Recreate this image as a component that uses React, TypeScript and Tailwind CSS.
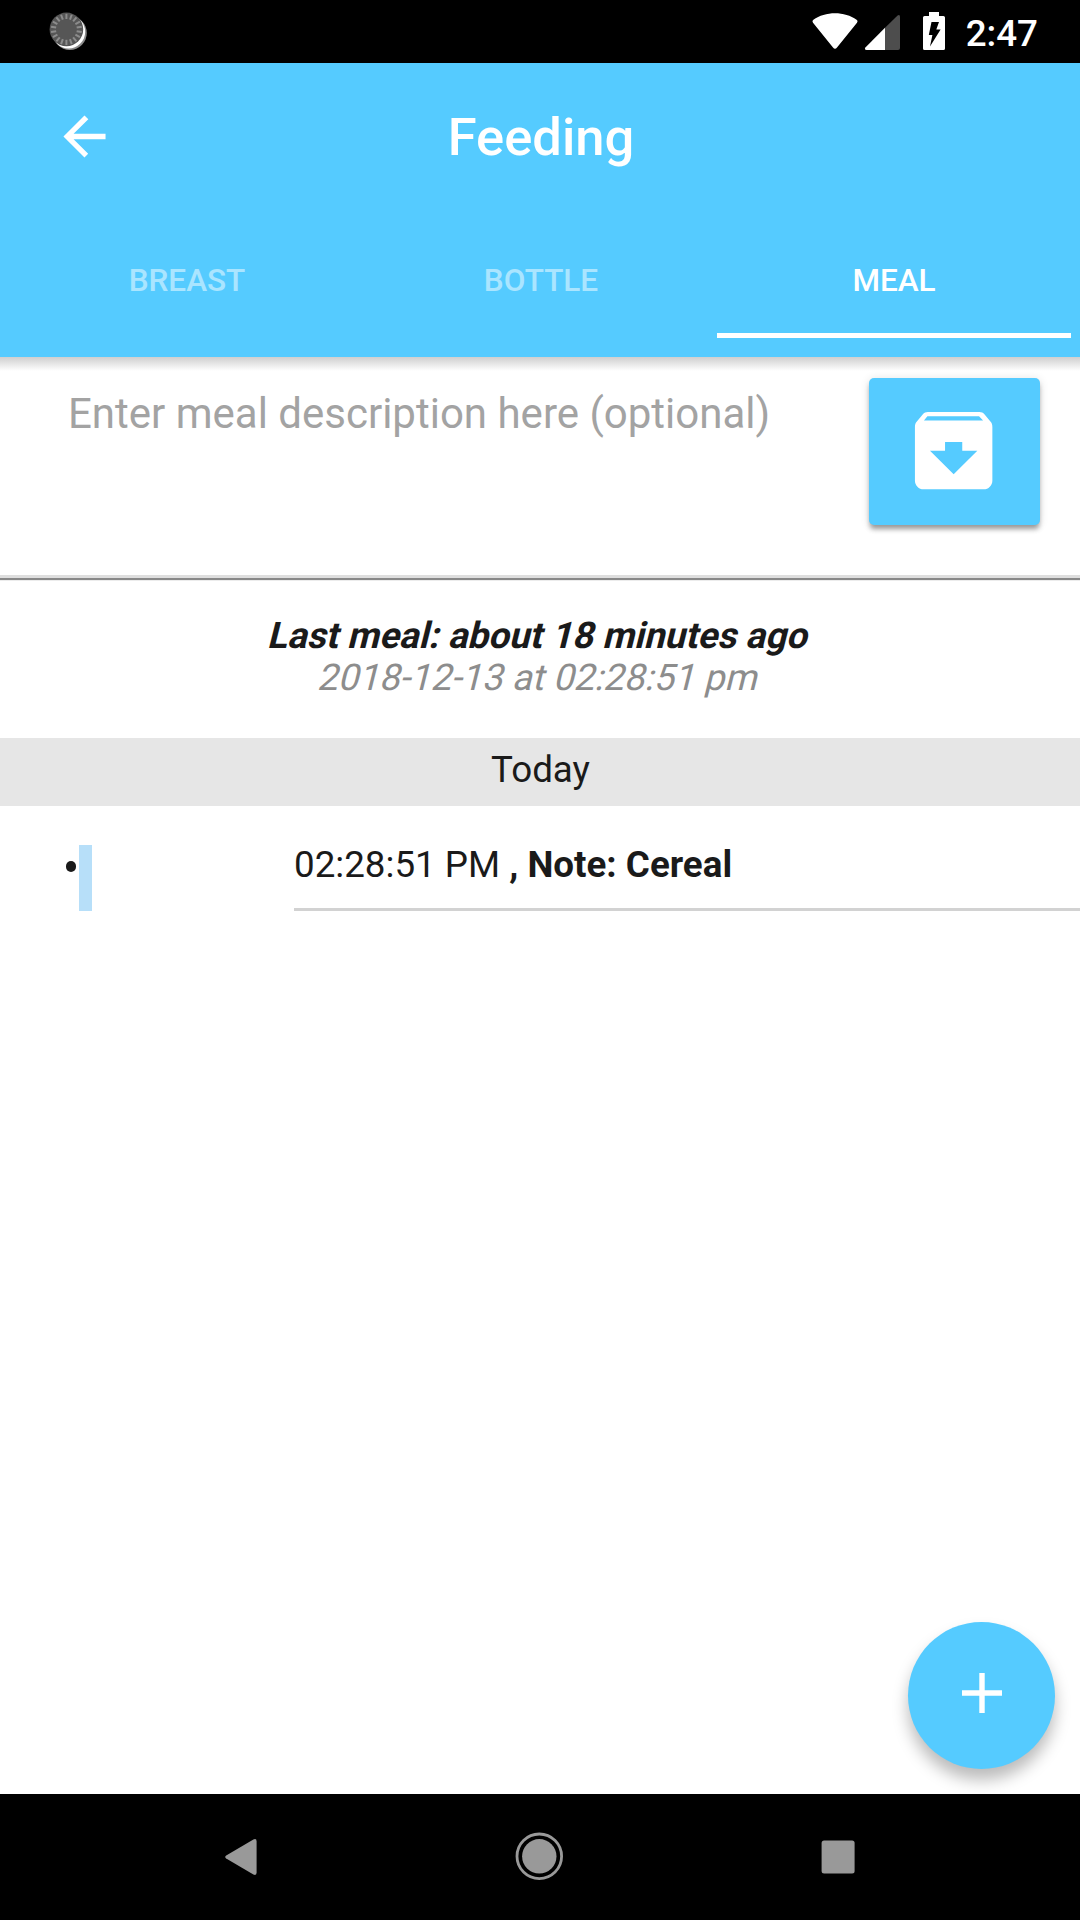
import React from "react";
import { IoMdArchive, IoMdArrowBack } from "react-icons/io";

const ticks = Array.from({ length: 18 }, (_, i) => i * 20);

function StatusBar() {
  return (
    <div className="flex h-[63px] shrink-0 items-start bg-black">
      <svg className="ml-[48px] mt-[11px] h-[41px] w-[41px]" viewBox="48 11 41 41">
        <circle cx="69.8" cy="33" r="17" fill="#8a8a8a" />
        <circle cx="68.6" cy="31.8" r="16.6" fill="#fff" />
        <circle cx="66.4" cy="29.4" r="16.8" fill="#565656" />
        {ticks.map((a) => (
          <line
            key={a}
            x1="66.4"
            y1="13.8"
            x2="66.4"
            y2="19"
            stroke="#8c8c8c"
            strokeWidth="2"
            transform={`rotate(${a} 66.4 29.4)`}
          />
        ))}
      </svg>
      <svg className="ml-auto h-[63px] w-[149px]" viewBox="806 0 149 63">
        <path
          d="M813 22.8 Q811.6 21 813.4 19.8 C825 11 845 11 856.6 19.8 Q858.4 21 857 22.8 L837 47.6 Q835 50 833 47.6 Z"
          fill="#fff"
        />
        <path d="M885 27.8 L897.6 15.4 Q900 14 900 16.8 V48 Q900 50 898 50 H885 Z" fill="#4d4d4d" />
        <path d="M885 27.8 V50 H866.6 Q864 49.6 865.4 47.4 Z" fill="#fff" />
        <path
          d="M929 12 H939 V16 H943.4 Q945 16 945 17.6 V48.4 Q945 50 943.4 50 H924.6 Q923 50 923 48.4 V17.6 Q923 16 924.6 16 H929 Z M931.5 22 L928.8 35 H932.4 L930 46.4 L940.6 29.4 H936.3 L939 22 Z"
          fill="#fff"
          fillRule="evenodd"
        />
      </svg>
      <span className="ml-[11px] mr-[42px] mt-[12px] text-[36.75px] font-medium leading-[43px] text-white">2:47</span>
    </div>
  );
}

function Header() {
  return (
    <header className="relative z-10 h-[294px] shrink-0 bg-[#55cbff] text-white">
      <div className="grid h-[147px] grid-cols-[181px_1fr_179px] items-center">
        <button className="ml-[53px] h-[63px] w-[63px]">
          <IoMdArrowBack className="h-[63px] w-[63px]" />
        </button>
        <h1 className="text-center text-[52.5px] font-medium leading-[62px]">Feeding</h1>
      </div>
      <nav className="mx-[9px] grid h-[128px] grid-cols-3 text-center text-[31.5px] font-medium">
        <div className="pl-[2px] pt-[47px] leading-[48px] opacity-50">BREAST</div>
        <div className="pl-[2px] pt-[47px] leading-[48px] opacity-50">BOTTLE</div>
        <div className="border-b-[5px] border-white pt-[47px] leading-[48px]">MEAL</div>
      </nav>
      <div className="absolute left-0 top-full h-[14px] w-full bg-gradient-to-b from-[#cfcfcf] to-white" />
    </header>
  );
}

export default function App() {
  return (
    <div className="flex h-[1920px] w-[1080px] flex-col overflow-hidden bg-white font-['Roboto',sans-serif] text-[36.75px] text-[#1a1a1a]">
      <StatusBar />
      <Header />
      <main className="relative flex flex-1 flex-col bg-white">
        <section className="flex h-[218px] items-start justify-between pl-[68px] pr-[40.4px] pt-[21px]">
          <p className="mt-[11px] text-[42px] leading-[49px] text-[#a3a3a3]">Enter meal description here (optional)</p>
          <button className="flex h-[147px] w-[170.6px] items-center justify-center rounded-[5px] bg-[#55cbff] pb-[2px] pr-[1.5px] text-white shadow-[0_5px_5px_-1px_rgba(0,0,0,0.36),0_1px_10px_rgba(0,0,0,0.12)]">
            <IoMdArchive className="h-[95.3px] w-[95.3px]" />
          </button>
        </section>
        <div className="h-[3px] bg-[#dedede]" />
        <div className="h-[2px] bg-[#888888]" />
        <div className="h-[1px] bg-[#ececec]" />
        <section className="flex h-[157px] flex-col pr-[7px] pt-[33.5px] text-center leading-[42px]">
          <p className="origin-[50%_33.5px] -skew-x-[14deg] font-bold">Last meal: about 18 minutes ago</p>
          <p className="origin-[50%_33.5px] -skew-x-[14deg] text-[#8d8d8d]">2018-12-13 at 02:28:51 pm</p>
        </section>
        <div className="h-[68px] bg-[#e6e6e6] pl-[1px] text-center leading-[64px]">Today</div>
        <section className="flex pt-[39px]">
          <div className="flex w-[294px] pl-[65.5px]">
            <div className="mt-[16px] h-[10.5px] w-[10.5px] rounded-full bg-[#1a1a1a]" />
            <div className="ml-[3px] h-[66px] w-[13px] bg-[#b7dff9]" />
          </div>
          <div className="h-[66px] flex-1 border-b-[3px] border-[#d2d2d2] leading-[39px]">
            02:28:51 PM <b>, Note: Cereal</b>
          </div>
        </section>
        <button className="absolute bottom-[25px] right-[24.6px] flex h-[147px] w-[147px] justify-center rounded-full bg-[#55cbff] pt-[51px] shadow-[0_11px_16px_rgba(0,0,0,0.27)]">
          <svg className="h-[40px] w-[40px]" viewBox="0 0 40 40">
            <path d="M20 0V40M0 20H40" stroke="#fff" strokeWidth="5.4" />
          </svg>
        </button>
      </main>
      <footer className="flex h-[126px] shrink-0 items-center justify-between bg-black px-[216px]">
        <svg className="h-[50px] w-[50px]" viewBox="216 1832 50 50">
          <path
            d="M226.2 1855.4 L253.4 1839.4 Q256.6 1838 256.6 1841.4 V1872.6 Q256.6 1876 253.4 1874.6 L226.2 1858.6 Q224.2 1857 226.2 1855.4 Z"
            fill="#999"
          />
        </svg>
        <svg className="h-[50px] w-[50px]" viewBox="0 0 50 50">
          <circle cx="24.3" cy="24.3" r="22.3" fill="none" stroke="#999" strokeWidth="2.8" />
          <circle cx="24.3" cy="24.3" r="17.2" fill="#999" />
        </svg>
        <svg className="h-[50px] w-[50px]" viewBox="0 0 50 50">
          <rect x="7.6" y="8.4" width="33" height="33" rx="2.5" fill="#999" />
        </svg>
      </footer>
    </div>
  );
}
